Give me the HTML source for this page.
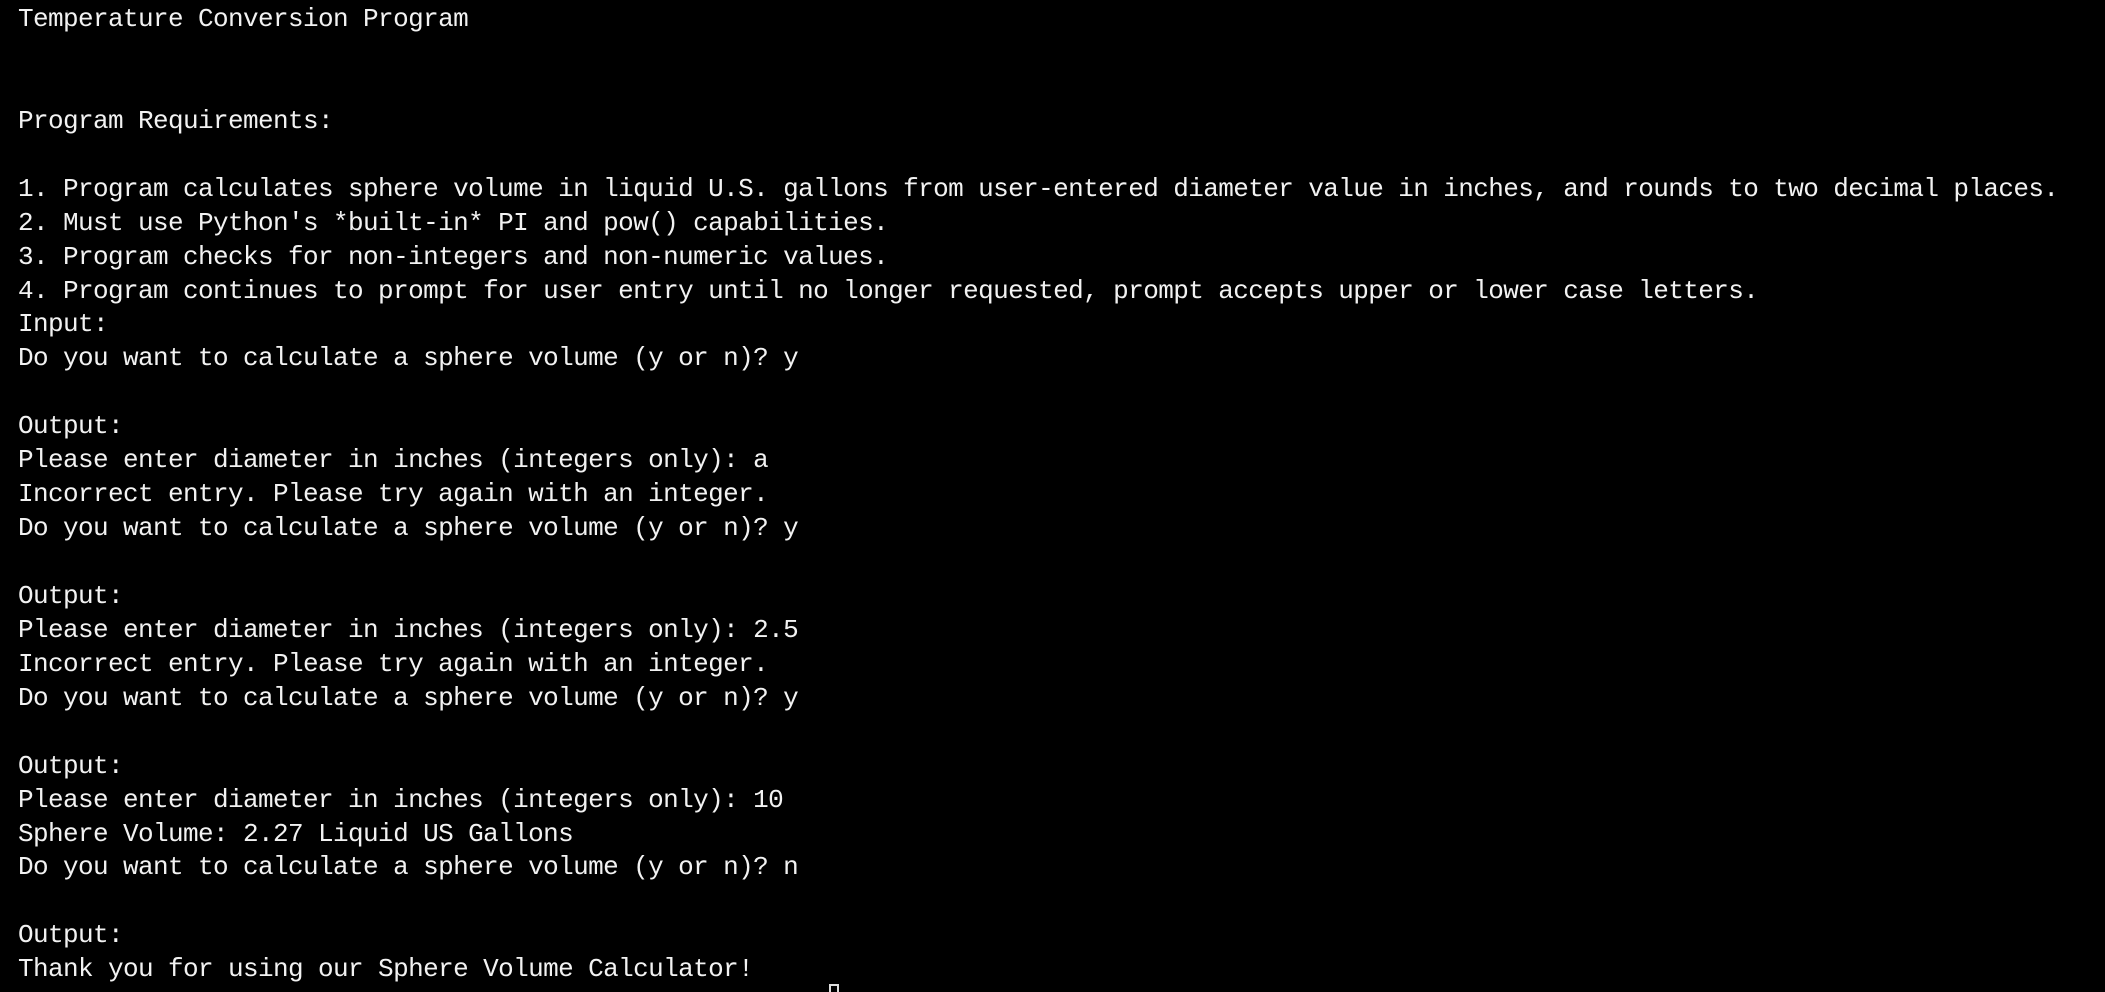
<!DOCTYPE html>
<html><head><meta charset="utf-8"><style>
html,body{margin:0;padding:0;background:#000;width:2105px;height:991px;overflow:hidden}
pre{margin:0;position:absolute;left:18px;top:3px;font-family:"Liberation Mono",monospace;font-size:26px;line-height:33.93px;color:#f2f2f2;letter-spacing:-0.6px}
.cur{position:absolute;left:829px;top:984px;width:10px;height:8px;border:2px solid #ddd;border-bottom:none;box-sizing:border-box}
</style></head><body>
<pre>Temperature Conversion Program


Program Requirements:

1. Program calculates sphere volume in liquid U.S. gallons from user-entered diameter value in inches, and rounds to two decimal places.
2. Must use Python's *built-in* PI and pow() capabilities.
3. Program checks for non-integers and non-numeric values.
4. Program continues to prompt for user entry until no longer requested, prompt accepts upper or lower case letters.
Input:
Do you want to calculate a sphere volume (y or n)? y

Output:
Please enter diameter in inches (integers only): a
Incorrect entry. Please try again with an integer.
Do you want to calculate a sphere volume (y or n)? y

Output:
Please enter diameter in inches (integers only): 2.5
Incorrect entry. Please try again with an integer.
Do you want to calculate a sphere volume (y or n)? y

Output:
Please enter diameter in inches (integers only): 10
Sphere Volume: 2.27 Liquid US Gallons
Do you want to calculate a sphere volume (y or n)? n

Output:
Thank you for using our Sphere Volume Calculator!</pre>
<div class="cur"></div>
</body></html>
